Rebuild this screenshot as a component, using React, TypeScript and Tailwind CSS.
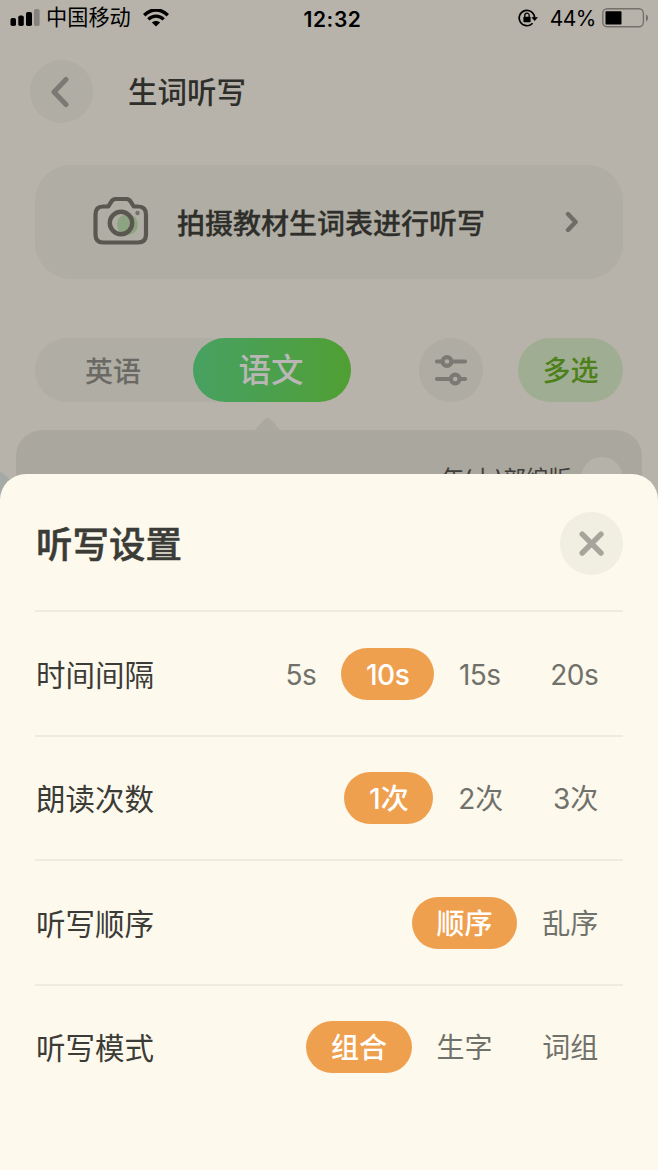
import { useState } from 'react';
import clsx from 'clsx';

interface SettingRow {
  key: string;
  label: string;
  options: string[];
}

const SETTINGS: SettingRow[] = [
  { key: 'interval', label: '时间间隔', options: ['5s', '10s', '15s', '20s'] },
  { key: 'repeat', label: '朗读次数', options: ['1次', '2次', '3次'] },
  { key: 'order', label: '听写顺序', options: ['顺序', '乱序'] },
  { key: 'mode', label: '听写模式', options: ['组合', '生字', '词组'] },
];

function StatusBar() {
  return (
    <div className="grid h-9 grid-cols-[1fr_auto_1fr] items-center pl-[10px] pr-[9px] text-black">
      <div className="flex items-center">
        <svg width="30" height="18" viewBox="0 0 30 18">
          <rect x="0.5" y="9" width="5.5" height="8" rx="1.8" />
          <rect x="8.3" y="6.5" width="5.5" height="10.5" rx="1.8" />
          <rect x="16" y="3" width="6" height="14" rx="1.8" />
          <rect x="24" y="0" width="5.6" height="17" rx="1.8" fill="#86837d" />
        </svg>
        <span className="ml-[6px] text-[21.2px] leading-none">中国移动</span>
        <svg className="ml-3" width="26" height="18" viewBox="0 0 26 18" fill="none" stroke="#000">
          <path d="M1.2 6.2C8 -0.8 18 -0.8 24.8 6.2" strokeWidth="3.4" />
          <path d="M5.3 10.4C9.8 6 16.2 6 20.7 10.4" strokeWidth="3.2" />
          <path d="M13 17.4L8.9 13.4C11.3 11.4 14.7 11.4 17.1 13.4Z" fill="#000" stroke="none" />
        </svg>
      </div>
      <span className="pl-[6px] pt-[2px] text-[21px] font-semibold leading-none tracking-[0.6px]">12:32</span>
      <div className="flex items-center justify-end">
        <svg width="20" height="18" viewBox="0 0 20 18">
          <path d="M16.6 9A7.7 7.7 0 1 0 14.6 14.2" fill="none" stroke="#000" strokeWidth="1.7" />
          <path d="M13.3 8.2H20L16.7 12Z" />
          <rect x="5.4" y="7.8" width="7.2" height="5.4" rx="0.8" />
          <path d="M6.8 8V6.4a2.2 2.2 0 0 1 4.4 0V8" fill="none" stroke="#000" strokeWidth="1.3" />
        </svg>
        <span className="ml-[12px] text-[21px] leading-none tracking-[-0.5px]">44%</span>
        <svg className="ml-[6px]" width="47" height="20" viewBox="0 0 47 20">
          <rect x="0.8" y="0.8" width="40.6" height="18" rx="4.5" fill="none" stroke="#74716b" strokeWidth="1.4" />
          <rect x="3.5" y="3.3" width="16" height="13.2" rx="0.8" />
          <path d="M44 6.2c2.7 1.3 2.7 6 0 7.3z" fill="#74716b" />
        </svg>
      </div>
    </div>
  );
}

function CameraIcon() {
  return (
    <svg width="56" height="50" viewBox="0 0 56 50" fill="none">
      <circle cx="34.5" cy="28.5" r="10.5" fill="#8ca481" />
      <path
        d="M10 10.5H15.3L18.3 5.6Q19.8 3 22.5 3H33.5Q36.2 3 37.7 5.6L40.7 10.5H45Q53 10.5 53 18.5V38.5Q53 46.5 45 46.5H10Q2.5 46.5 2.5 38.5V18.5Q2.5 10.5 10 10.5Z"
        stroke="#595750"
        strokeWidth="4.2"
        strokeLinejoin="round"
      />
      <circle cx="28" cy="27" r="11.2" stroke="#595750" strokeWidth="4.4" />
      <circle cx="44.5" cy="17" r="2.2" fill="#74716a" />
    </svg>
  );
}

function DictationPage() {
  return (
    <div className="flex h-full flex-col">
      <StatusBar />

      <div className="mt-6 flex items-center pl-[30px]">
        <button className="flex size-[63px] items-center justify-center rounded-full bg-[#b0ada5] pr-[4px]">
          <svg width="20" height="32" viewBox="0 0 20 32" fill="none" stroke="#7b7973" strokeWidth="5" strokeLinecap="round" strokeLinejoin="round">
            <path d="M16 3.5L4 16L16 28.5" />
          </svg>
        </button>
        <h1 className="ml-[35px] pt-[2px] text-[29.5px] font-medium leading-none text-[#2e2e2b]">生词听写</h1>
      </div>

      <button className="mx-[35px] mt-[42px] flex h-[114px] shrink-0 items-center rounded-[36px] bg-[#b0ada4] pl-[58px] pr-[44px] text-[#2e2e2b]">
        <div className="pb-[2px]">
          <CameraIcon />
        </div>
        <span className="ml-[28px] pt-[3px] text-[28px] font-medium leading-none [-webkit-text-stroke:0.3px]">拍摄教材生词表进行听写</span>
        <svg className="ml-auto" width="14" height="22" viewBox="0 0 14 22" fill="none" stroke="#6f6d66" strokeWidth="4.4" strokeLinecap="round" strokeLinejoin="round">
          <path d="M3 3L10.6 11L3 19" />
        </svg>
      </button>

      <div className="mt-[59px] flex items-center px-[35px]">
        <div className="flex h-16 w-[316px] rounded-full bg-[#b0ada5]">
          <button className="w-[158px] pr-[2px] pt-[3px] text-[28px] font-medium text-[#6b6963]">英语</button>
          <button className="w-[158px] rounded-full bg-linear-to-r from-[#47a161] to-[#509f32] pr-[2px] pt-[3px] text-[32.5px] font-medium text-[#b8b7b5]">
            语文
          </button>
        </div>
        <button className="ml-[68px] flex size-16 items-center justify-center rounded-full bg-[#afaca4]">
          <svg width="34" height="34" viewBox="0 0 34 34" fill="none" stroke="#7b7973" strokeWidth="4.2" strokeLinecap="round">
            <path d="M3 8.5H8M18 8.5H31M3 26H16M26 26H31" />
            <circle cx="13" cy="8.5" r="4.4" />
            <circle cx="21.2" cy="26" r="4.4" />
          </svg>
        </button>
        <button className="ml-auto h-16 w-[105px] rounded-full bg-[#9fae92] pt-[2px] text-[28px] font-medium text-[#4d801b]">多选</button>
      </div>

      {/* book panel, its pointer sits under the active tab */}
      <svg className="ml-[255px] mt-[16px] shrink-0" width="25" height="12" viewBox="0 0 25 12" fill="#aba8a0">
        <path d="M0 12L9 1.8Q12.5 -1.8 16 1.8L25 12Z" />
      </svg>
      <div className="mx-4 flex h-[100px] shrink-0 items-start justify-end rounded-t-[26px] bg-linear-to-b from-[#aba8a0] to-[#a7a49c] pr-[19px] pt-[27px]">
        <span className="mr-[10px] mt-[11px] text-[23px] leading-none tracking-[-0.3px] text-[#3f3e3a]">年(上)部编版</span>
        <span className="size-[42px] rounded-full bg-[#b5b2aa]" />
      </div>
    </div>
  );
}

function SettingsSheet() {
  const [selected, setSelected] = useState<Record<string, string>>({
    interval: '10s',
    repeat: '1次',
    order: '顺序',
    mode: '组合',
  });

  return (
    <div className="absolute inset-x-0 bottom-0 h-[696px] rounded-t-[26px] bg-[#fdf9ec] px-[35px]">
      <div className="flex h-[136px] items-center justify-between pt-[3px]">
        <h2 className="pl-px pt-[4px] text-[36.5px] font-medium leading-none text-[#3b3b37] [-webkit-text-stroke:0.5px]">听写设置</h2>
        <button className="flex size-[63px] items-center justify-center rounded-full bg-[#f1eee2]">
          <svg width="26" height="26" viewBox="0 0 26 26" fill="none" stroke="#a6a59b" strokeWidth="5.4" strokeLinecap="round">
            <path d="M3.2 3.2L22 22M22 3.2L3.2 22" />
          </svg>
        </button>
      </div>
      {SETTINGS.map((row) => (
        <div key={row.key} className="flex h-[124.6px] items-center justify-between border-t-2 border-[#eeebdf]">
          <span className="pl-px pt-[4px] text-[29.5px] leading-none text-[#3b3b37]">{row.label}</span>
          <div className="flex pt-[0.6px]">
            {row.options.map((option) => (
              <button
                key={option}
                onClick={() => setSelected({ ...selected, [row.key]: option })}
                className={clsx(
                  'h-[52px] rounded-full px-[24.8px] pt-[2px] text-[28px] leading-none',
                  row.key === 'interval' && 'tracking-[-0.5px]',
                  selected[row.key] === option ? 'bg-[#efa04f] font-medium text-white' : 'text-[#71716b]',
                )}
              >
                {option}
              </button>
            ))}
          </div>
        </div>
      ))}
    </div>
  );
}

export default function App() {
  return (
    <div className="relative h-[1170px] w-[658px] overflow-hidden bg-[#b7b3aa] font-[Inter,'Noto_Sans_CJK_SC',sans-serif]">
      <div className="absolute -left-[48px] top-[467px] size-[64px] rounded-full bg-[#a5aaa7]" />
      <DictationPage />
      <SettingsSheet />
    </div>
  );
}
